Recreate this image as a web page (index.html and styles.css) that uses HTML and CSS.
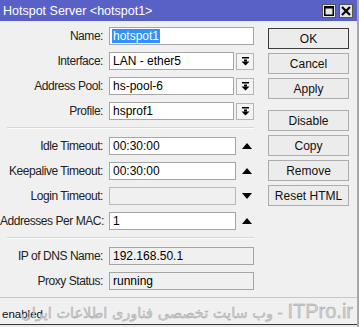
FILE: index.html
```html
<!doctype html>
<html lang="en">
  <head>
    <meta charset="UTF-8" />
    <title>Hotspot Server</title>
    <link rel="stylesheet" href="styles.css">
  </head>
  <body>
    <div class="window">
        <div class="titlebar">
            <span class="title">Hotspot Server &lt;hotspot1&gt;</span>
            <div class="winbtns">
                <span class="winbtn">
                    <svg width="10" height="10" viewBox="0 0 10 10"><rect x="0.75" y="0.75" width="8.5" height="8.5" fill="none" stroke="#000" stroke-width="1.5"/><rect x="0" y="0" width="10" height="2.5" fill="#000"/></svg>
                </span>
                <span class="winbtn">
                    <svg width="10" height="10" viewBox="0 0 10 10"><path d="M1 1 L9 9 M9 1 L1 9" stroke="#000" stroke-width="2.2"/></svg>
                </span>
            </div>
        </div>

        <div class="content">
            <div class="form">
                <div class="row">
                    <label>Name:</label>
                    <div class="field wide"><span class="sel">hotspot1</span></div>
                </div>
                <div class="row">
                    <label>Interface:</label>
                    <div class="field">LAN - ether5</div>
                    <span class="drop"><svg width="9" height="9" viewBox="0 0 9 9"><rect x="1" y="0" width="7" height="1.5" fill="#000"/><rect x="3" y="2.5" width="3" height="2" fill="#000"/><polygon points="0.5,4.5 8.5,4.5 4.5,8.5" fill="#000"/></svg></span>
                </div>
                <div class="row">
                    <label>Address Pool:</label>
                    <div class="field">hs-pool-6</div>
                    <span class="drop"><svg width="9" height="9" viewBox="0 0 9 9"><rect x="1" y="0" width="7" height="1.5" fill="#000"/><rect x="3" y="2.5" width="3" height="2" fill="#000"/><polygon points="0.5,4.5 8.5,4.5 4.5,8.5" fill="#000"/></svg></span>
                </div>
                <div class="row">
                    <label>Profile:</label>
                    <div class="field">hsprof1</div>
                    <span class="drop"><svg width="9" height="9" viewBox="0 0 9 9"><rect x="1" y="0" width="7" height="1.5" fill="#000"/><rect x="3" y="2.5" width="3" height="2" fill="#000"/><polygon points="0.5,4.5 8.5,4.5 4.5,8.5" fill="#000"/></svg></span>
                </div>

                <div class="sep"></div>

                <div class="row">
                    <label>Idle Timeout:</label>
                    <div class="field time">00:30:00</div>
                    <span class="tri"><svg width="10" height="6" viewBox="0 0 10 6"><polygon points="0,6 10,6 5,0" fill="#000"/></svg></span>
                </div>
                <div class="row">
                    <label>Keepalive Timeout:</label>
                    <div class="field time">00:30:00</div>
                    <span class="tri"><svg width="10" height="6" viewBox="0 0 10 6"><polygon points="0,6 10,6 5,0" fill="#000"/></svg></span>
                </div>
                <div class="row">
                    <label>Login Timeout:</label>
                    <div class="field time off"></div>
                    <span class="tri"><svg width="10" height="6" viewBox="0 0 10 6"><polygon points="0,0 10,0 5,6" fill="#000"/></svg></span>
                </div>
                <div class="row">
                    <label>Addresses Per MAC:</label>
                    <div class="field time">1</div>
                    <span class="tri"><svg width="10" height="6" viewBox="0 0 10 6"><polygon points="0,6 10,6 5,0" fill="#000"/></svg></span>
                </div>

                <div class="sep"></div>

                <div class="row">
                    <label>IP of DNS Name:</label>
                    <div class="field wide ro">192.168.50.1</div>
                </div>
                <div class="row">
                    <label>Proxy Status:</label>
                    <div class="field wide ro">running</div>
                </div>
            </div>

            <div class="buttons">
                <button class="default">OK</button>
                <button>Cancel</button>
                <button>Apply</button>
                <button class="gap">Disable</button>
                <button>Copy</button>
                <button>Remove</button>
                <button>Reset HTML</button>
            </div>
        </div>

        <div class="status">
            <span>enabled</span>
            <span class="mark" dir="rtl"><span class="latin">ITPro.ir</span> - وب سایت تخصصی فناوری اطلاعات ایران</span>
        </div>
        <div class="bottom"></div>
    </div>
  </body>
</html>
```

FILE: styles.css
```css
* {
    box-sizing: border-box;
}

body {
    margin: 0;
    padding: 0;
    font-family: "Liberation Sans", Arial, sans-serif;
    font-size: 12px;
    color: #000;
    background-color: #f0f0f0;
}

.window {
    width: 359px;
    height: 327px;
    display: flex;
    flex-direction: column;
    background-color: #f0f0f0;
    border-right: 2px solid #a8a8a8;
    overflow: hidden;
}

.titlebar {
    height: 22px;
    flex-shrink: 0;
    background-color: #5a61c6;
    display: flex;
    align-items: center;
    justify-content: space-between;
    padding: 0 4px 0 3px;
    border-bottom: 1px solid #e8e8f4;
}
.title {
    color: #fff;
    font-size: 12.5px;
}
.winbtns {
    display: flex;
    gap: 3px;
    margin-top: 1px;
}
.winbtn {
    width: 14px;
    height: 14px;
    background-color: #e6e6e6;
    border: 1px solid #555;
    display: flex;
    align-items: center;
    justify-content: center;
}

.content {
    display: flex;
    padding-top: 5px;
    flex-grow: 1;
}

.form {
    width: 268px;
}

.row {
    display: flex;
    align-items: center;
    height: 18px;
    margin-bottom: 7px;
}
.row label {
    width: 103px;
    text-align: right;
    flex-shrink: 0;
    white-space: nowrap;
    font-size: 12px;
    letter-spacing: -0.45px;
    color: #222;
}
.field {
    width: 125px;
    height: 18px;
    background-color: #fff;
    border: 1px solid #a5a5a5;
    padding: 0 3px;
    margin-left: 6px;
    line-height: 16px;
    white-space: nowrap;
    overflow: hidden;
}
.field.wide {
    width: 145px;
}
.field.time {
    width: 127px;
}
.field.off {
    background-color: #f0f0f0;
    border-color: #b8b8b8;
}
.field.ro {
    background-color: #f0f0f0;
}
.sel {
    background-color: #3390ff;
    color: #fff;
    padding: 0 1px;
    margin-left: -1px;
}

.drop {
    width: 18px;
    height: 17px;
    margin-left: 2px;
    border: 1px solid #b4b4b4;
    background-color: #f4f4f4;
    display: flex;
    align-items: center;
    justify-content: center;
}
.tri {
    width: 19px;
    display: flex;
    justify-content: center;
    margin-left: 1px;
}

.sep {
    width: 247px;
    height: 2px;
    margin-left: 7px;
    border-top: 1px solid #d6d6d6;
    border-bottom: 1px solid #fbfbfb;
    margin-top: 1px;
    margin-bottom: 8px;
}

.buttons {
    display: flex;
    flex-direction: column;
    gap: 4px;
    padding-top: 1px;
}
button {
    width: 81px;
    height: 21px;
    font-family: "Liberation Sans", Arial, sans-serif;
    font-size: 12px;
    color: #111;
    background-color: #ececec;
    border: 1px solid #acacac;
    padding: 0;
    margin: 0;
}
button.default {
    border-color: #3c3c3c;
}
button.gap {
    margin-top: 7px;
}

.status {
    position: relative;
    height: 27px;
    flex-shrink: 0;
    border-top: 1px solid #c8c8c8;
    display: flex;
    align-items: flex-end;
    padding: 0 0 4px 2px;
    color: #111;
    font-size: 11.5px;
}
.mark {
    position: absolute;
    right: 4px;
    bottom: 1px;
    font-size: 14.5px;
    color: #cfcfcf;
    white-space: nowrap;
    font-family: "DejaVu Sans", "Noto Sans", sans-serif;
    -webkit-text-stroke: 0.4px #a4a4a4;
}
.mark .latin {
    font-family: "Liberation Sans", Arial, sans-serif;
    font-size: 20px;
}
.bottom {
    height: 5px;
    flex-shrink: 0;
    border-top: 1px solid #3a3a3a;
    background-color: #e9e9e9;
}
```
